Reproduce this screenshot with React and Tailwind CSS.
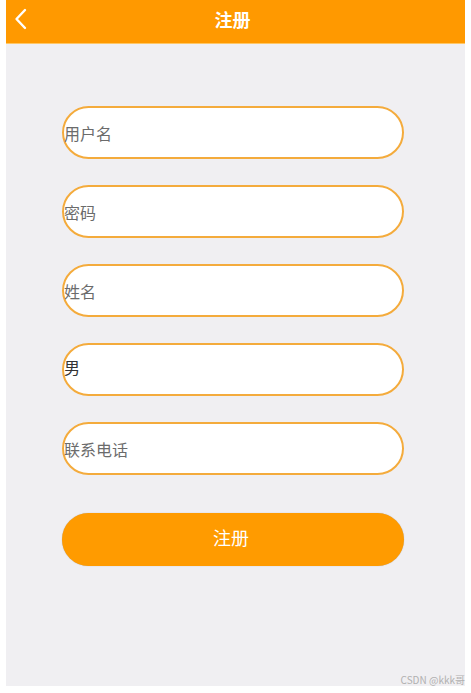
export default function App() {
  const font = { fontFamily: '"Noto Sans CJK SC", "Noto Sans", sans-serif' };
  const fields = ["用户名", "密码", "姓名"];
  return (
    <div className="w-[471px] h-[693px] bg-white" style={font}>
      <div className="ml-[6px] w-[459px] h-[686px] bg-[#f0eff2] flex flex-col">
        <div className="h-[44px] bg-[#ff9900] relative flex items-center justify-center border-b border-[#ffc766]">
          <svg className="absolute left-[7px] top-[8px]" width="16" height="22" viewBox="0 0 16 22" fill="none">
            <path d="M12 2 L3.5 11 L12 20" stroke="white" strokeWidth="2.4" strokeLinecap="round" strokeLinejoin="round" />
          </svg>
          <span className="text-white text-[18px] font-bold -mt-[5px] -ml-[6px]">注册</span>
        </div>
        <div className="flex flex-col pl-[56px] pt-[62px] gap-[26px]">
          {fields.map((f) => (
            <div key={f} className="w-[342px] h-[53px] rounded-full border-2 border-[#f4ab3c] bg-white flex items-center">
              <span className="text-[16px] text-[#6b6b6b] leading-none">{f}</span>
            </div>
          ))}
          <div className="w-[342px] h-[53px] rounded-full border-2 border-[#f4ab3c] bg-white flex items-center">
            <span className="text-[16px] text-[#333] leading-none -mt-[6px]">男</span>
          </div>
          <div className="w-[342px] h-[53px] rounded-full border-2 border-[#f4ab3c] bg-white flex items-center">
            <span className="text-[16px] text-[#6b6b6b] leading-none">联系电话</span>
          </div>
          <div className="mt-[12px] w-[342px] h-[53px] rounded-full bg-[#ff9b00] flex items-center justify-center shadow-[0_0_1px_rgba(0,0,0,0.3)]">
            <span className="text-white text-[18px] -mt-[4px] -ml-[4px]">注册</span>
          </div>
        </div>
        <div className="flex-1" />
        <div className="flex justify-end pb-[1px]">
          <span className="text-[10px] text-[#b0b0b0] leading-none">CSDN @kkk哥</span>
        </div>
      </div>
    </div>
  );
}
